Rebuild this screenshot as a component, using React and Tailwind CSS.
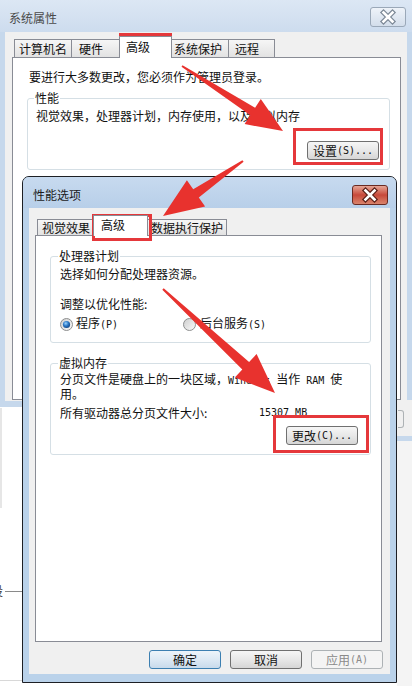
import React from "react";

const M = ({ children }) => (
  <span className="font-['DejaVu_Sans_Mono',monospace] text-[10px]">{children}</span>
);

function Radio({ checked }) {
  return (
    <svg width="13" height="13" viewBox="0 0 13 13" className="shrink-0">
      <defs>
        <linearGradient id="rbg" x1="0" y1="0" x2="1" y2="1">
          <stop offset="0" stopColor="#cdcdcd" />
          <stop offset="1" stopColor="#fbfbfb" />
        </linearGradient>
        <radialGradient id="rdot" cx="0.4" cy="0.35" r="0.7">
          <stop offset="0" stopColor="#9ad4ff" />
          <stop offset="0.5" stopColor="#2b78c6" />
          <stop offset="1" stopColor="#11427f" />
        </radialGradient>
      </defs>
      <circle cx="6.5" cy="6.5" r="6" fill="url(#rbg)" stroke="#8e8f8f" />
      {checked && <circle cx="6.5" cy="6.5" r="3.6" fill="url(#rdot)" />}
    </svg>
  );
}

const btnBase =
  "flex h-[19px] w-[72px] items-center justify-center rounded-[3px] border leading-[16px] ";
const btnNormal =
  "border-[#707070] bg-linear-to-b from-[#f6f6f6] via-[#e8e8e8] to-[#d6d6d6]";

function XGlyph({ dark }) {
  return (
    <svg width="36" height="20" viewBox="0 0 36 20">
      <path d="M13.5 5.5 L22.5 14.5 M22.5 5.5 L13.5 14.5" stroke={dark} strokeWidth="5" strokeLinecap="square" />
      <path d="M13.5 5.5 L22.5 14.5 M22.5 5.5 L13.5 14.5" stroke="#ffffff" strokeWidth="2.6" strokeLinecap="square" />
    </svg>
  );
}

const tabOff =
  "border border-b-0 border-[#898c95] bg-linear-to-b from-[#f6f6f6] to-[#e2e2e2]";

export default function App() {
  return (
    <div className="relative h-[686px] w-[412px] overflow-hidden bg-white font-['Noto_Sans_CJK_SC','Liberation_Sans',sans-serif] text-[12px] text-[#111]">
      {/* page behind */}
      <div className="absolute left-0 top-[408px] h-[100px] w-[2px] bg-[#e6e6e6]" />
      <div className="absolute left-[-9px] top-[583px] flex items-center leading-[16px] text-[#333]">
        <span>设</span>
        <span className="ml-[2px] h-px w-[20px] bg-[#8a8a8a]" />
      </div>
      <div className="absolute left-0 top-[680px] h-px w-[24px] bg-[#d8d8d8]" />
      <div className="absolute left-[397px] top-[441px] h-[245px] w-[15px] bg-[#f4f4f4]" />

      {/* outer window: 系统属性 */}
      <div className="absolute left-0 top-0 flex h-[407px] w-[412px] flex-col bg-[#c6d8ec]">
        <div className="flex h-[32px] items-start justify-between bg-linear-to-b from-[#dce7f4] to-[#cddcee] pl-[9px] pr-[6px]">
          <span className="pt-[10px] leading-[16px] text-[#4a4a4a]">系统属性</span>
          <div className="mt-[7px] h-[20px] w-[36px] rounded-[3px] border border-[#9aa8b8] bg-linear-to-b from-[#eef3f9] to-[#d3deeb]">
            <div className="-ml-px -mt-px">
              <XGlyph dark="#7c8896" />
            </div>
          </div>
        </div>
        <div className="mx-[5px] flex flex-1 flex-col bg-[#f0f0f0] pb-[1px] pl-[7px] pr-[6px] pt-[4px]">
          <div className="flex h-[21px] items-end pl-[2px]">
            <div className={"h-[18px] w-[58px] pl-[4px] leading-[17px] " + tabOff}>计算机名</div>
            <div className={"-ml-px h-[18px] w-[49px] pl-[7px] leading-[17px] " + tabOff}>硬件</div>
            <div className="relative z-10 -mb-px -ml-px h-[22px] w-[53px] border border-b-0 border-[#898c95] bg-white pl-[6px] leading-[19px]">
              高级
            </div>
            <div className={"-ml-px h-[18px] w-[58px] pl-[2px] leading-[17px] " + tabOff}>系统保护</div>
            <div className={"-ml-px h-[18px] w-[47px] pl-[6px] leading-[17px] " + tabOff}>远程</div>
          </div>
          <div className="flex-1 border border-[#898c95] bg-white">
            <p className="pl-[16px] pt-[11px] leading-[16px]">要进行大多数更改，您必须作为管理员登录。</p>
            <fieldset className="ml-[14px] mr-[10px] mt-[5px] rounded-[3px] border border-[#d5dfe5] pb-[9px] pl-[8px] pr-[10px] pt-[2px]">
              <legend className="-ml-[2px] px-[1px] leading-[16px]">性能</legend>
              <p className="leading-[16px]">视觉效果，处理器计划，内存使用，以及虚拟内存</p>
              <div className="mt-[17px] flex justify-end">
                <div className={btnBase + btnNormal}>
                  设置<M>(S)...</M>
                </div>
              </div>
            </fieldset>
          </div>
        </div>
        <div className="h-[6px]" />
      </div>
      {/* right fragment of outer window */}
      <div className="absolute left-[397px] top-[400px] flex h-[41px] w-[15px] flex-col bg-[#f0f0f0]">
        <div className="ml-[1px] mt-[10px] h-[18px] w-[6px] rounded-r-[3px] border border-l-0 border-[#adb2b5]" />
        <div className="mt-auto h-[5px] bg-[#c6d8ec]" />
      </div>

      {/* inner dialog: 性能选项 */}
      <div className="absolute left-[22px] top-[176px] flex h-[507px] w-[375px] flex-col overflow-hidden rounded-t-[7px] border border-[#1d1f24] bg-[#bad2ea]">
        <div className="flex h-[31px] shrink-0 items-start justify-between bg-linear-to-b from-[#c7daef] to-[#b8cfe9] pl-[10px] pr-[8px]">
          <span className="pt-[10px] leading-[16px] text-[#1b1b1b]">性能选项</span>
          <div className="mt-[8px] h-[20px] w-[36px] rounded-[3px] border border-[#6a2a22] bg-linear-to-b from-[#e5a596] via-[#c7483a] to-[#d9836c]">
            <div className="-ml-px -mt-px">
              <XGlyph dark="#5a2018" />
            </div>
          </div>
        </div>
        <div className="mx-[6px] flex flex-1 flex-col bg-[#f0f0f0] pl-[6px] pr-[8px] pt-[7px] pb-[5px]">
          <div className="flex h-[20px] shrink-0 items-end pl-[2px]">
            <div className={"h-[16px] w-[57px] pl-[4px] leading-[15px] " + tabOff}>视觉效果</div>
            <div className="relative z-10 -mb-px -ml-px h-[21px] w-[55px] border border-b-0 border-[#898c95] bg-white pl-[7px] leading-[17px]">
              高级
            </div>
            <div className={"-ml-px h-[16px] w-[80px] pl-[3px] leading-[15px] " + tabOff}>数据执行保护</div>
          </div>
          <div className="flex-1 border border-[#898c95] bg-white">
            <fieldset className="ml-[14px] mr-[10px] mt-[12px] rounded-[3px] border border-[#d5dfe5] pb-[10px] pl-[9px] pr-[10px] pt-[2px]">
              <legend className="-ml-[2px] px-[1px] leading-[16px]">处理器计划</legend>
              <p className="leading-[16px]">选择如何分配处理器资源。</p>
              <p className="mt-[14px] leading-[16px]">调整以优化性能:</p>
              <div className="mt-[4px] flex h-[16px] items-center">
                <div className="flex w-[123px] items-center gap-[3px] leading-[16px]">
                  <Radio checked />
                  <span>
                    程序<M>(P)</M>
                  </span>
                </div>
                <div className="flex items-center gap-[4px] leading-[16px]">
                  <Radio />
                  <span>
                    后台服务<M>(S)</M>
                  </span>
                </div>
              </div>
            </fieldset>
            <fieldset className="ml-[14px] mr-[10px] mt-[12px] rounded-[3px] border border-[#d5dfe5] pb-[9px] pl-[9px] pr-[12px] pt-[1px]">
              <legend className="-ml-[2px] px-[1px] leading-[16px]">虚拟内存</legend>
              <p className="leading-[13px]">
                分页文件是硬盘上的一块区域，<M>Windows </M>当作<M> RAM </M>使
                <br />
                用。
              </p>
              <div className="mt-[5px] flex leading-[16px]">
                <span className="w-[199px]">所有驱动器总分页文件大小:</span>
                <M>15307 MB</M>
              </div>
              <div className="mt-[5px] flex justify-end">
                <div className={btnBase + btnNormal}>
                  更改<M>(C)...</M>
                </div>
              </div>
            </fieldset>
          </div>
          <div className="mt-[8px] flex shrink-0 justify-end gap-[9px] -mr-px">
            <div className={btnBase + "border-[#3c7fb1] bg-linear-to-b from-[#edf4fa] via-[#dde9f4] to-[#c8daeb]"}>确定</div>
            <div className={btnBase + btnNormal}>取消</div>
            <div className={btnBase + "border-[#adb2b5] bg-[#f4f4f4] text-[#8a8a8a]"}>
              应用<M>(A)</M>
            </div>
          </div>
        </div>
        <div className="h-[8px] shrink-0" />
      </div>

      {/* red highlight boxes */}
      <div className="absolute left-[119px] top-[33px] h-[25px] w-[53px] border-[3px] border-[#e5383b]" />
      <div className="absolute left-[293px] top-[128px] h-[37px] w-[90px] border-[3px] border-[#e5383b]" />
      <div className="absolute left-[92px] top-[214px] h-[27px] w-[60px] border-[3px] border-[#e5383b]" />
      <div className="absolute left-[273px] top-[415px] h-[38px] w-[96px] border-[3px] border-[#e5383b]" />

      {/* arrows */}
      <svg className="pointer-events-none absolute left-0 top-0" width="412" height="686" viewBox="0 0 412 686">
        <g fill="#e8322e">
          <polygon points="182.5,65.2 255.1,107.7 260.8,98.9 283,131 244.6,124.1 250.3,115.3 181.5,66.8" />
          <polygon points="242.4,160.2 193.2,189.3 186.9,180.2 163,216 205.1,206.6 198.8,197.5 243.6,161.8" />
          <polygon points="163.7,288.3 249.1,362.1 256.6,354.1 275,393 234.8,377.5 242.3,369.5 162.3,289.7" />
        </g>
      </svg>
    </div>
  );
}
